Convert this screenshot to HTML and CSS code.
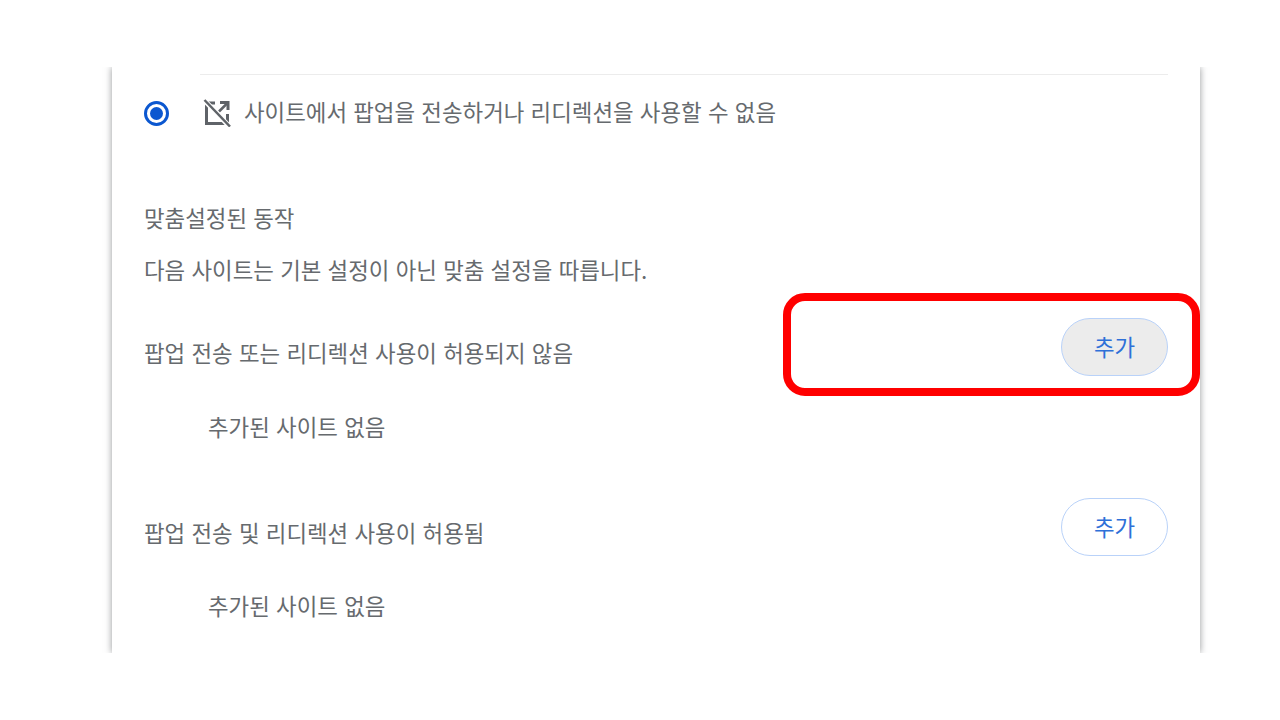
FILE: index.html
```html
<!DOCTYPE html>
<html lang="ko">
<head>
    <meta charset="UTF-8">
    <title>팝업 및 리디렉션</title>
    <link rel="stylesheet" href="styles.css">
</head>
<body>
    <div class="frame">
        <main class="card">
            <div class="divider"></div>
            <div class="radio-row">
                <span class="radio"><span class="radio-dot"></span></span>
                <svg class="block-icon" viewBox="0 0 28 28" width="28" height="28" fill="none" stroke="#5f6368">
                    <path d="M12 4H3.500V24.500H24.500V15" stroke-width="3"/>
                    <path d="M17 3.500H25V11" stroke-width="3"/>
                    <path d="M24.500 4L16 12.500" stroke-width="2.500"/>
                    <path d="M1 1L27 28" stroke="#fff" stroke-width="5"/>
                    <path d="M1.500 1L27 27.500" stroke-width="2.500"/>
                </svg>
                <span class="radio-label">사이트에서 팝업을 전송하거나 리디렉션을 사용할 수 없음</span>
            </div>
            <h2 class="section-title">맞춤설정된 동작</h2>
            <p class="section-desc">다음 사이트는 기본 설정이 아닌 맞춤 설정을 따릅니다.</p>
            <div class="list-head first">
                <span>팝업 전송 또는 리디렉션 사용이 허용되지 않음</span>
                <button class="add-btn hover">추가</button>
            </div>
            <p class="empty">추가된 사이트 없음</p>
            <div class="list-head second">
                <span>팝업 전송 및 리디렉션 사용이 허용됨</span>
                <button class="add-btn">추가</button>
            </div>
            <p class="empty">추가된 사이트 없음</p>
        </main>
    </div>
    <div class="highlight"></div>
</body>
</html>
```

FILE: styles.css
```css
/* Global Styles */
html, body {
    margin: 0;
    padding: 0;
    height: 720px;
    overflow: hidden;
    background: #fff;
}
body {
    font-family: 'Noto Sans CJK KR', 'Liberation Sans', sans-serif;
    font-size: 22.4px;
    color: #666a6e;
    position: relative;
}
.frame {
    margin-top: 67px;
    height: 586px;
    overflow: hidden;
}
.card {
    width: 1088px;
    height: 586px;
    margin-left: 112px;
    padding: 7px 32px 0;
    box-sizing: border-box;
    background: #fff;
    box-shadow: 0 0 7px rgba(60, 64, 67, 0.55);
}
.divider {
    margin-left: 56px;
    border-top: 1px solid #ececec;
}
.radio-row {
    display: flex;
    align-items: center;
    height: 76px;
}
.radio {
    width: 25px;
    height: 25px;
    box-sizing: border-box;
    border: 3px solid #0b57d0;
    border-radius: 50%;
    display: flex;
    align-items: center;
    justify-content: center;
}
.radio-dot {
    width: 13px;
    height: 13px;
    border-radius: 50%;
    background: #0b57d0;
}
.block-icon {
    margin-left: 34px;
    margin-right: 13px;
}
.radio-label {
    padding-bottom: 4px;
}
.section-title {
    margin: 50px 0 0;
    font-size: inherit;
    font-weight: 400;
    line-height: 32px;
}
.section-desc {
    margin: 20px 0 0;
    line-height: 32px;
}
.list-head {
    display: flex;
    justify-content: space-between;
    align-items: center;
}
.list-head.first {
    margin-top: 33px;
}
.list-head.second {
    margin-top: 56px;
}
.list-head span {
    padding-top: 10px;
}
.add-btn {
    width: 107px;
    height: 58px;
    padding: 0 0 3px;
    border: 1.500px solid #b9d2f9;
    border-radius: 29px;
    background: #fff;
    font: inherit;
    color: #2f70d8;
}
.add-btn.hover {
    background: #ececec;
}
.empty {
    margin: 34px 0 0 64px;
    line-height: 32px;
}
.list-head.second + .empty {
    margin-top: 33px;
}
.highlight {
    position: absolute;
    left: 783px;
    top: 293px;
    width: 417px;
    height: 103px;
    box-sizing: border-box;
    border: 8px solid #ff0000;
    border-radius: 22px;
}
```
